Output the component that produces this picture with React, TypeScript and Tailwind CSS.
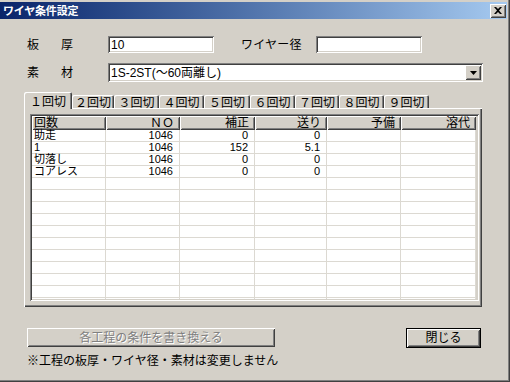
import React from "react";

const raised =
  "shadow-[inset_1px_1px_#ffffff,inset_-1px_-1px_#404040,inset_2px_2px_#d4d0c8,inset_-2px_-2px_#808080]";
const sunken =
  "shadow-[inset_1px_1px_#808080,inset_-1px_-1px_#ffffff,inset_2px_2px_#404040,inset_-2px_-2px_#d4d0c8]";

const cols = [
  { label: "回数", w: "w-[74px]", align: "text-left pl-[2px]" },
  { label: "ＮＯ", w: "w-[74px]", align: "text-right pr-[6px]" },
  { label: "補正", w: "w-[75px]", align: "text-right pr-[6px]" },
  { label: "送り", w: "w-[72px]", align: "text-right pr-[6px]" },
  { label: "予備", w: "w-[74px]", align: "text-right pr-[6px]" },
  { label: "溶代", w: "w-[75px]", align: "text-right pr-[6px]" },
];

const data: string[][] = [
  ["助走", "1046", "0", "0", "", ""],
  ["1", "1046", "152", "5.1", "", ""],
  ["切落し", "1046", "0", "0", "", ""],
  ["コアレス", "1046", "0", "0", "", ""],
];
while (data.length < 15) data.push(["", "", "", "", "", ""]);

const tabs = [
  { t: "２回切", w: "w-[42px]" },
  { t: "３回切", w: "w-[45px]" },
  { t: "４回切", w: "w-[45px]" },
  { t: "５回切", w: "w-[46px]" },
  { t: "６回切", w: "w-[45px]" },
  { t: "７回切", w: "w-[44px]" },
  { t: "８回切", w: "w-[45px]" },
  { t: "９回切", w: "w-[45px]" },
];

export default function App() {
  return (
    <div className="w-[510px] h-[382px] bg-[#d4d0c8] overflow-hidden font-['Liberation_Sans','Noto_Sans_CJK_JP',sans-serif] text-[12px] leading-[12px] text-black shadow-[inset_-1px_-1px_#404040,inset_-2px_-2px_#808080]">
      {/* title bar */}
      <div className="pt-[2px] pr-[3px]">
        <div className="h-[17px] bg-gradient-to-r from-[#0a246a] to-[#a6caf0] flex items-center justify-between pl-[3px] pr-[1px]">
          <span className="text-white font-bold text-[11px] leading-[12px] tracking-[-0.2px]">
            ワイヤ条件設定
          </span>
          <div className={`w-[16px] h-[14px] bg-[#d4d0c8] flex items-center justify-center ${raised}`}>
            <svg width="8" height="7" viewBox="0 0 8 7">
              <path d="M0 0h2l2 2 2-2h2L5 3.5 8 7H6L4 5 2 7H0l3-3.5z" fill="#000" />
            </svg>
          </div>
        </div>
      </div>

      {/* row 1 */}
      <div className="mt-[17px] flex items-center h-[17px] pl-[27px]">
        <span className="w-[34px]">板</span>
        <span className="w-[47px]">厚</span>
        <div className={`w-[106px] h-[17px] bg-white ${sunken} flex items-center pl-[3px]`}>10</div>
        <span className="ml-[27px] w-[75px] tracking-[0.2px]">ワイヤー径</span>
        <div className={`w-[106px] h-[17px] bg-white ${sunken}`} />
      </div>

      {/* row 2 */}
      <div className="mt-[10px] flex items-center h-[19px] pl-[27px]">
        <span className="w-[34px]">素</span>
        <span className="w-[47px]">材</span>
        <div className={`w-[375px] h-[19px] bg-white ${sunken} flex items-center justify-between pl-[3px] pr-[2px] py-[2px]`}>
          <span>1S-2ST(～60両離し)</span>
          <div className={`w-[16px] h-full bg-[#d4d0c8] ${raised} flex items-center justify-center`}>
            <svg width="7" height="4" viewBox="0 0 7 4">
              <path d="M0 0h7L3.5 4z" fill="#000" />
            </svg>
          </div>
        </div>
      </div>

      {/* tabs */}
      <div className="mt-[10px] flex items-end h-[16px] pl-[24px]">
        <div className="relative z-10 w-[48px] h-[17px] -mb-[1px] bg-[#d4d0c8] rounded-tl-[2px] rounded-tr-[2px] shadow-[inset_1px_1px_#ffffff,inset_-1px_0_#404040,inset_-2px_0_#808080] flex justify-center pt-[4px]">
          １回切
        </div>
        {tabs.map((tb) => (
          <div
            key={tb.t}
            className={`${tb.w} h-[13px] bg-[#d4d0c8] rounded-tl-[2px] rounded-tr-[2px] shadow-[inset_1px_1px_#ffffff,inset_-1px_0_#404040,inset_-2px_0_#808080] flex justify-center pt-[2px]`}
          >
            {tb.t}
          </div>
        ))}
      </div>

      {/* panel */}
      <div className="ml-[24px] w-[458px] h-[199px] bg-[#d4d0c8] shadow-[inset_1px_1px_#ffffff,inset_-1px_-1px_#404040,inset_-2px_-2px_#808080] pt-[6px] pl-[6px]">
        <div className={`w-[449px] h-[187px] bg-[#d4d0c8] ${sunken} p-[2px]`}>
          <div className="w-full h-full overflow-hidden">
            <div className="flex h-[14px]">
              {cols.map((c) => (
                <div
                  key={c.label}
                  className={`${c.w} h-[14px] bg-[#d4d0c8] ${raised} ${c.align} pt-[1px] leading-[12px]`}
                >
                  {c.label}
                </div>
              ))}
            </div>
            {data.map((row, i) => (
              <div key={i} className="flex h-[12px]">
                {row.map((v, j) => (
                  <div
                    key={j}
                    className={`${cols[j].w} h-[12px] bg-white border-r border-b border-[#dcd9d2] ${cols[j].align} text-[11px] leading-[11px] whitespace-nowrap`}
                  >
                    {v}
                  </div>
                ))}
              </div>
            ))}
          </div>
        </div>
      </div>

      {/* buttons */}
      <div className="mt-[21px] flex items-start pl-[27px]">
        <div className={`w-[248px] h-[19px] bg-[#d4d0c8] ${raised} flex items-center justify-center text-[#808080] [text-shadow:1px_1px_0_#ffffff]`}>
          各工程の条件を書き換える
        </div>
        <div className="ml-[131px] w-[75px] h-[20px] border border-black">
          <div className={`w-full h-full bg-[#d4d0c8] ${raised} flex items-center justify-center`}>
            閉じる
          </div>
        </div>
      </div>

      {/* note */}
      <div className="mt-[6px] pl-[27px] leading-[14px]">※工程の板厚・ワイヤ径・素材は変更しません</div>
    </div>
  );
}
